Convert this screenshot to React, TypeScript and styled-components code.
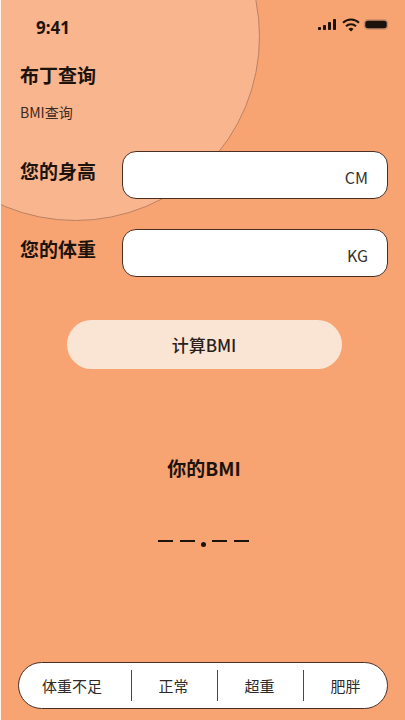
import React from 'react';
import styled, { createGlobalStyle } from 'styled-components';

const GlobalStyle = createGlobalStyle`
  html, body {
    margin: 0;
    padding: 0;
    background: #fdf3ea;
  }
  * {
    box-sizing: border-box;
  }
`;

const Page = styled.div`
  position: relative;
  width: 405px;
  height: 720px;
  margin-left: 1px;
  overflow: hidden;
  background: #f8a472;
  color: #1d130d;
  font-family: 'Noto Sans CJK SC', 'Noto Sans', sans-serif;
  display: flex;
  flex-direction: column;
`;

const Circle = styled.div`
  position: absolute;
  left: -110px;
  top: -148px;
  width: 369px;
  height: 369px;
  border-radius: 50%;
  background: #f9b58e;
  border: 1px solid #b98263;
`;

const Content = styled.div`
  position: relative;
  flex: 1;
  display: flex;
  flex-direction: column;
  padding: 0 18px 11px 17px;
`;

const StatusBar = styled.div`
  height: 52px;
  display: flex;
  justify-content: space-between;
  padding: 16px 0 0 18px;
`;

const Time = styled.span`
  font-family: 'Noto Sans', sans-serif;
  font-size: 17px;
  font-weight: 700;
  line-height: 24px;
`;

const StatusIcons = styled.svg`
  width: 72px;
  height: 20px;
`;

const Title = styled.h1`
  margin: 11px 0 0 2px;
  font-size: 19px;
  font-weight: 700;
  line-height: 24px;
`;

const Subtitle = styled.p`
  margin: 15px 0 0 2px;
  font-size: 14px;
  font-weight: 400;
  line-height: 20px;
  color: #3b2a20;
`;

const FieldRow = styled.div<{ $top: number }>`
  display: flex;
  align-items: flex-start;
  justify-content: space-between;
  margin-top: ${({ $top }) => $top}px;
`;

const FieldLabel = styled.label`
  margin: 8px 0 0 2px;
  font-size: 19px;
  font-weight: 700;
  line-height: 24px;
`;

const FieldBox = styled.div`
  width: 266px;
  height: 48px;
  padding: 5px 19px 0 0;
  border: 1.5px solid #4a3024;
  border-radius: 14px;
  background: #fff;
  text-align: right;
  font-size: 16px;
  line-height: 40px;
  color: #33302e;
`;

const CalcButton = styled.button`
  align-self: center;
  width: 275px;
  height: 49px;
  margin: 43px 0 0 2px;
  border: 0;
  border-radius: 25px;
  background: #fae5d5;
  color: #2a211c;
  font-family: inherit;
  font-size: 17px;
  font-weight: 500;
`;

const ResultLabel = styled.div`
  margin: 85px 0 0 2px;
  text-align: center;
  font-size: 19px;
  font-weight: 700;
  line-height: 28px;
`;

const ResultValue = styled.div`
  align-self: center;
  display: flex;
  align-items: flex-end;
  gap: 7px;
  height: 12px;
  margin: 54px 0 0 1px;
`;

const Dash = styled.span`
  width: 15px;
  height: 2.5px;
  margin-bottom: 6px;
  background: #1d130d;
`;

const Dot = styled.span`
  width: 5px;
  height: 5px;
  margin: 0 -1px 1px;
  border-radius: 50%;
  background: #1d130d;
`;

const Legend = styled.div`
  margin-top: auto;
  height: 47px;
  display: grid;
  grid-template-columns: 113px 86px 86px 1fr;
  align-items: center;
  border: 1.5px solid #4a3024;
  border-radius: 24px;
  background: #fff;
`;

const LegendItem = styled.div<{ $divider?: boolean; $inset?: number }>`
  height: 31px;
  padding-right: ${({ $inset }) => $inset ?? 0}px;
  text-align: center;
  font-size: 15px;
  line-height: 31px;
  color: #2f2a27;
  border-right: ${({ $divider }) => ($divider ? '1.5px solid #4d4743' : '0')};
`;

export default function App() {
  return (
    <>
      <GlobalStyle />
      <Page>
        <Circle />
        <Content>
          <StatusBar>
            <Time>9:41</Time>
            <StatusIcons viewBox="0 0 72 20">
              <rect x="2" y="11" width="3" height="3" rx="0.8" fill="#1d130d" />
              <rect x="7" y="9" width="3" height="5" rx="0.8" fill="#1d130d" />
              <rect x="12" y="6" width="3" height="8" rx="0.8" fill="#1d130d" />
              <rect x="17" y="3" width="3" height="11" rx="0.8" fill="#1d130d" />
              <path d="M27 6.8a11.5 11.5 0 0 1 16 0" fill="none" stroke="#1d130d" strokeWidth="2" />
              <path d="M30 10.3a7 7 0 0 1 10 0" fill="none" stroke="#1d130d" strokeWidth="2" />
              <path d="M32.5 13a3.5 3.5 0 0 1 5 0l-2.5 2.6z" fill="#1d130d" />
              <rect x="48.5" y="4" width="23" height="9" rx="3.5" fill="#1d130d" stroke="#c58a68" strokeWidth="1.5" />
            </StatusIcons>
          </StatusBar>
          <Title>布丁查询</Title>
          <Subtitle>BMI查询</Subtitle>
          <FieldRow $top={29}>
            <FieldLabel>您的身高</FieldLabel>
            <FieldBox>CM</FieldBox>
          </FieldRow>
          <FieldRow $top={30}>
            <FieldLabel>您的体重</FieldLabel>
            <FieldBox>KG</FieldBox>
          </FieldRow>
          <CalcButton>计算BMI</CalcButton>
          <ResultLabel>你的BMI</ResultLabel>
          <ResultValue>
            <Dash />
            <Dash />
            <Dot />
            <Dash />
            <Dash />
          </ResultValue>
          <Legend>
            <LegendItem $divider $inset={6}>体重不足</LegendItem>
            <LegendItem $divider $inset={2}>正常</LegendItem>
            <LegendItem $divider $inset={2}>超重</LegendItem>
            <LegendItem>肥胖</LegendItem>
          </Legend>
        </Content>
      </Page>
    </>
  );
}
